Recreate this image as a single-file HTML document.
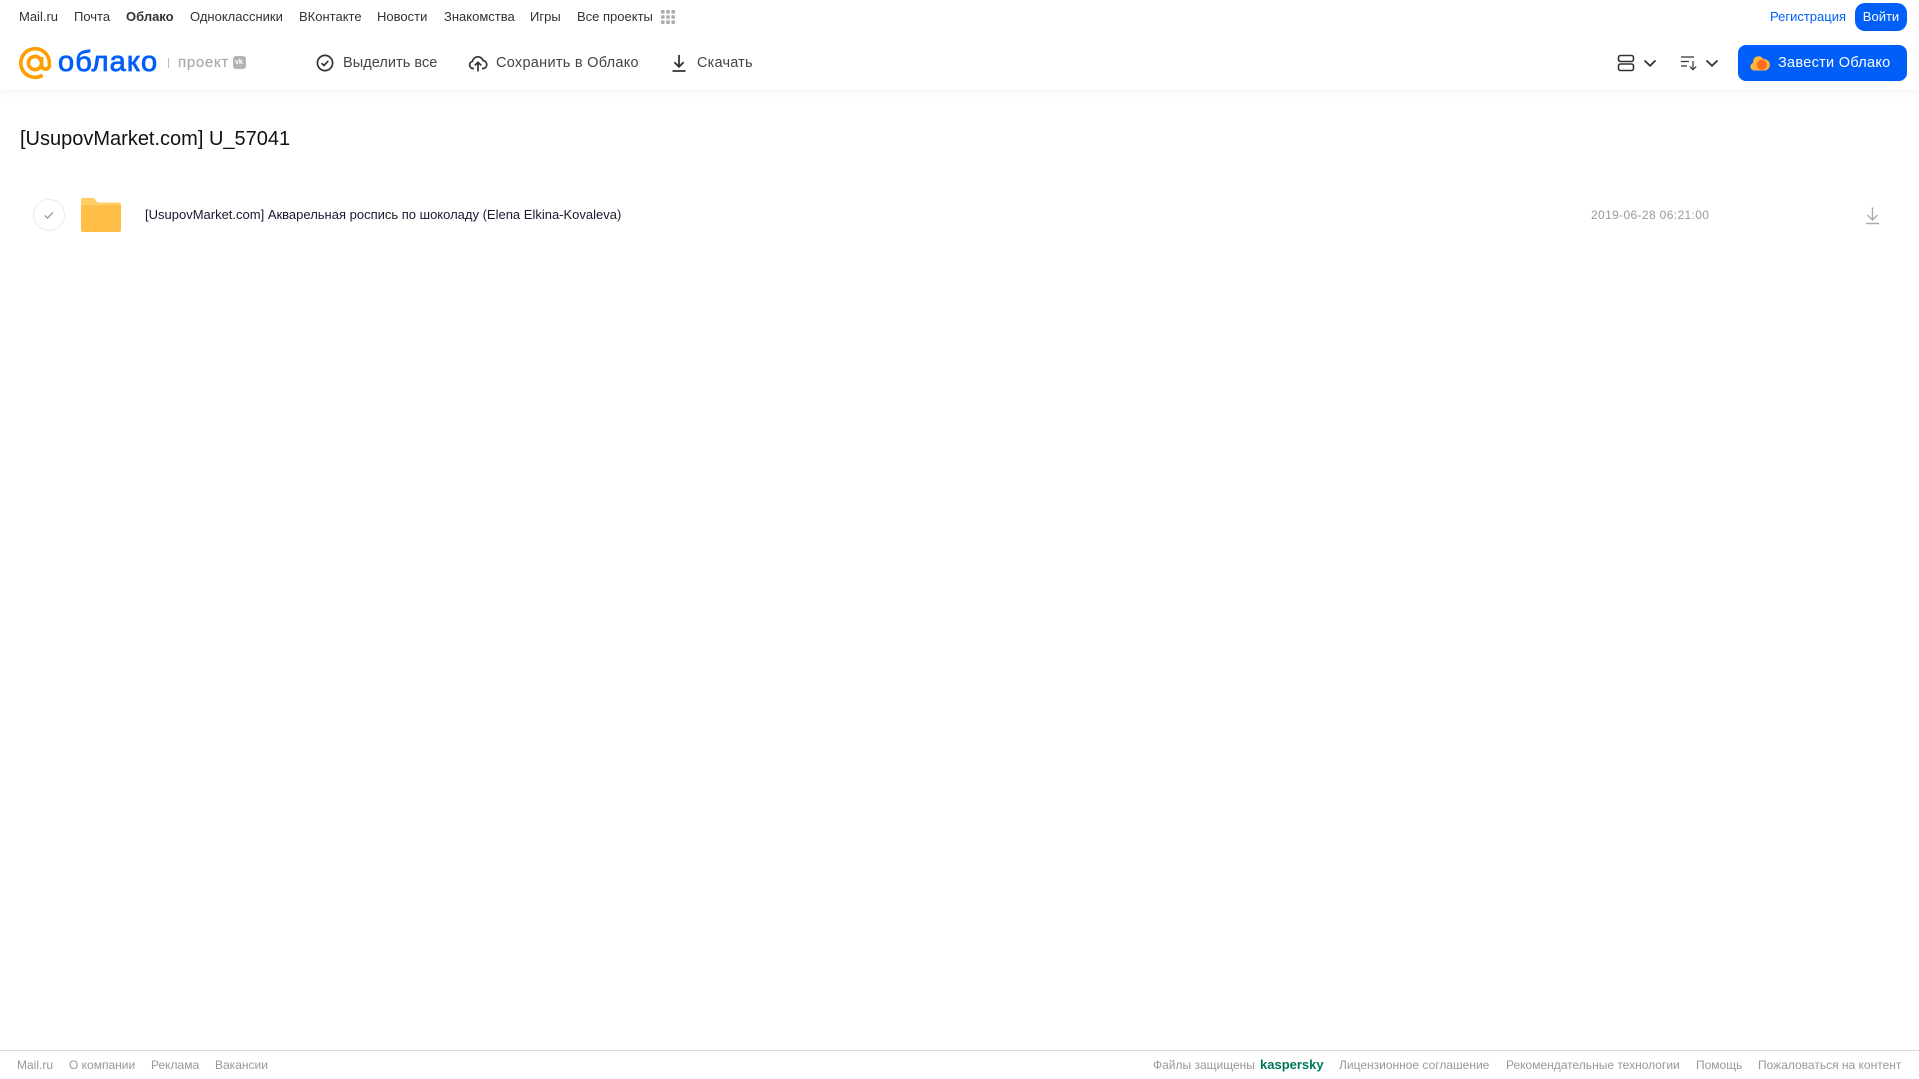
<!DOCTYPE html>
<html lang="ru"><head><meta charset="utf-8"><title>Облако</title>
<style>
html,body{margin:0;padding:0;background:#fff;width:1919px;height:1079px;overflow:hidden;font-family:"Liberation Sans",sans-serif}
.t{position:absolute;white-space:nowrap;line-height:20px}
.n{top:7px;font-size:13px;color:#333}
.b{top:53px;font-size:14.5px;color:#444}
.f{top:1055px;font-size:12px;color:#999}
svg{position:absolute;display:block}
</style></head><body>
<div style="position:absolute;left:0;top:0;width:1919px;height:90px;background:#fff;box-shadow:0 2px 8px rgba(0,0,0,.06)"></div>

<span class="t n" style="left:19px">Mail.ru</span>
<span class="t n" style="left:74px">Почта</span>
<span class="t n" style="left:126px;font-weight:bold">Облако</span>
<span class="t n" style="left:190px">Одноклассники</span>
<span class="t n" style="left:299px">ВКонтакте</span>
<span class="t n" style="left:377px">Новости</span>
<span class="t n" style="left:444px">Знакомства</span>
<span class="t n" style="left:530px">Игры</span>
<span class="t n" style="left:577px">Все проекты</span>
<svg style="left:660px;top:9px" width="16" height="16" viewBox="0 0 16 16" fill="#aaa"><rect x="1" y="1" width="3.6" height="3.6" rx="1"/><rect x="6.2" y="1" width="3.6" height="3.6" rx="1"/><rect x="11.4" y="1" width="3.6" height="3.6" rx="1"/><rect x="1" y="6.2" width="3.6" height="3.6" rx="1"/><rect x="6.2" y="6.2" width="3.6" height="3.6" rx="1"/><rect x="11.4" y="6.2" width="3.6" height="3.6" rx="1"/><rect x="1" y="11.4" width="3.6" height="3.6" rx="1"/><rect x="6.2" y="11.4" width="3.6" height="3.6" rx="1"/><rect x="11.4" y="11.4" width="3.6" height="3.6" rx="1"/></svg>

<span class="t n" style="left:1770px;color:#005ff9">Регистрация</span>
<div style="position:absolute;left:1855px;top:3px;width:52px;height:28px;border-radius:10px;background:#005ff9;color:#fff;font-size:13px;line-height:28px;text-align:center">Войти</div>

<svg style="left:18px;top:46px" width="34" height="34" viewBox="0 0 34 34" fill="none" stroke="#ff9e00" stroke-width="3.6"><circle cx="17" cy="17" r="6.6"/><path d="M23.6 11v8.2a3.9 3.9 0 0 0 7.8 0V17A14.3 14.3 0 1 0 24.6 29.2"/></svg>
<span class="t" style="left:58px;top:46px;font-size:29px;line-height:32px;color:#005ff9;-webkit-text-stroke:.8px #005ff9;letter-spacing:1.1px">облако</span>
<div style="position:absolute;left:168px;top:58px;width:1px;height:10px;background:#bbb"></div>
<span class="t" style="left:178px;top:53px;font-size:15px;color:#aaa;-webkit-text-stroke:.2px #aaa;letter-spacing:.7px">проект</span>
<div style="position:absolute;left:233px;top:56px;width:13px;height:13px;border-radius:3px;background:#b3b3b3"></div>
<span class="t" style="left:235px;top:57px;font-size:7px;line-height:11px;font-weight:bold;color:#fff">vk</span>

<svg style="left:315px;top:54px" width="20" height="18" viewBox="0 0 20 18" fill="none" stroke="#333" stroke-width="1.7"><circle cx="10" cy="9" r="7.6"/><path d="M6.6 9.2l2.4 2.3 4.3-4.6"/></svg>
<span class="t b" style="left:343px;letter-spacing:.05px">Выделить все</span>
<svg style="left:468px;top:53px" width="20" height="20" viewBox="0 0 20 20" fill="none" stroke="#333" stroke-width="1.7"><path d="M6 15.5H5a3.6 3.6 0 0 1-.6-7.1A5.6 5.6 0 0 1 15.2 7.6a4 4 0 0 1 .3 7.9H14"/><path d="M10 18.5V9.5M6.8 12.4L10 9.3l3.2 3.1"/></svg>
<span class="t b" style="left:496px;letter-spacing:.28px">Сохранить в Облако</span>
<svg style="left:670px;top:53px" width="18" height="20" viewBox="0 0 18 20" fill="none" stroke="#333" stroke-width="1.8"><path d="M9 2v11.5M4.4 9.2L9 13.8l4.6-4.6M2.500 18h13"/></svg>
<span class="t b" style="left:697px;letter-spacing:.2px">Скачать</span>

<svg style="left:1617px;top:54px" width="18" height="18" viewBox="0 0 18 18" fill="none" stroke="#333" stroke-width="1.6"><rect x="1.500" y="1.500" width="15" height="6" rx="2"/><rect x="1.500" y="10" width="15" height="6.500" rx="2"/></svg>
<svg style="left:1643px;top:59px" width="14" height="9" viewBox="0 0 14 9" fill="none" stroke="#333" stroke-width="1.8"><path d="M1.500 1.500L7 6.800l5.500-5.300"/></svg>
<svg style="left:1680px;top:55px" width="18" height="16" viewBox="0 0 18 16" fill="none" stroke="#333" stroke-width="1.200"><path d="M1 2h13M1 6.500h8M1 11h6M13 6v8.500M9.800 11.500l3.200 3.200 3.200-3.200"/></svg>
<svg style="left:1705px;top:59px" width="14" height="9" viewBox="0 0 14 9" fill="none" stroke="#333" stroke-width="1.8"><path d="M1.500 1.500L7 6.800l5.500-5.300"/></svg>

<div style="position:absolute;left:1738px;top:45px;width:169px;height:36px;border-radius:8px;background:#005ff9"></div>
<svg style="left:1750px;top:54px" width="20" height="17" viewBox="0 0 20 17"><path fill="#ffb43c" d="M4.200 16.500a4 4 0 0 1-1-7.800A5.500 5.500 0 0 1 13.500 5.200a5.700 5.700 0 0 1 1.500 11.300z"/><circle cx="11.800" cy="10.800" r="5" fill="#ff6a1f"/></svg>
<span class="t" style="left:1778px;top:53px;font-size:14.5px;color:#fff;letter-spacing:.29px">Завести Облако</span>

<span class="t" style="left:20px;top:127px;font-size:20px;line-height:24px;color:#111">[UsupovMarket.com] U_57041</span>

<div style="position:absolute;left:33px;top:199px;width:30px;height:30px;border:1px solid #ececec;border-radius:50%"></div>
<svg style="left:42px;top:208px" width="14" height="14" viewBox="0 0 14 14" fill="none" stroke="#999" stroke-width="1.300"><path d="M2.800 7.500l2.700 2.600 5.500-5.800"/></svg>
<svg style="left:81px;top:198px" width="40" height="34" viewBox="0 0 40 34"><path fill="#ffcf66" d="M2 0h9c2 0 3 .8 4 2.500C15.800 4 16.500 4.500 18 4.500h20a2 2 0 0 1 2 2V12H0V2a2 2 0 0 1 2-2z"/><path fill="#ffbe47" d="M0 7h38a2 2 0 0 1 2 2v23a2 2 0 0 1-2 2H2a2 2 0 0 1-2-2z"/></svg>
<span class="t" style="left:145px;top:205px;font-size:13px;color:#1a1a2e">[UsupovMarket.com] Акварельная роспись по шоколаду (Elena Elkina-Kovaleva)</span>
<span class="t" style="left:1591px;top:205px;font-size:12px;color:#999;letter-spacing:.36px">2019-06-28 06:21:00</span>
<svg style="left:1865px;top:206px" width="15" height="19" viewBox="0 0 15 19" fill="none" stroke="#aaa" stroke-width="1.400"><path d="M7.500 1.500v12M2.500 9l5 5 5-5M1 17.500h13"/></svg>

<div style="position:absolute;left:0;top:1050px;width:1919px;height:1px;background:#d9d9d9"></div>
<span class="t f" style="left:17px">Mail.ru</span>
<span class="t f" style="left:69px">О компании</span>
<span class="t f" style="left:151px">Реклама</span>
<span class="t f" style="left:215px">Вакансии</span>
<span class="t f" style="left:1153px">Файлы защищены</span>
<span class="t f" style="left:1260px;font-size:13px;font-weight:bold;color:#00775c">kaspersky</span>
<span class="t f" style="left:1339px">Лицензионное соглашение</span>
<span class="t f" style="left:1506px">Рекомендательные технологии</span>
<span class="t f" style="left:1696px">Помощь</span>
<span class="t f" style="left:1758px">Пожаловаться на контент</span>
</body></html>
